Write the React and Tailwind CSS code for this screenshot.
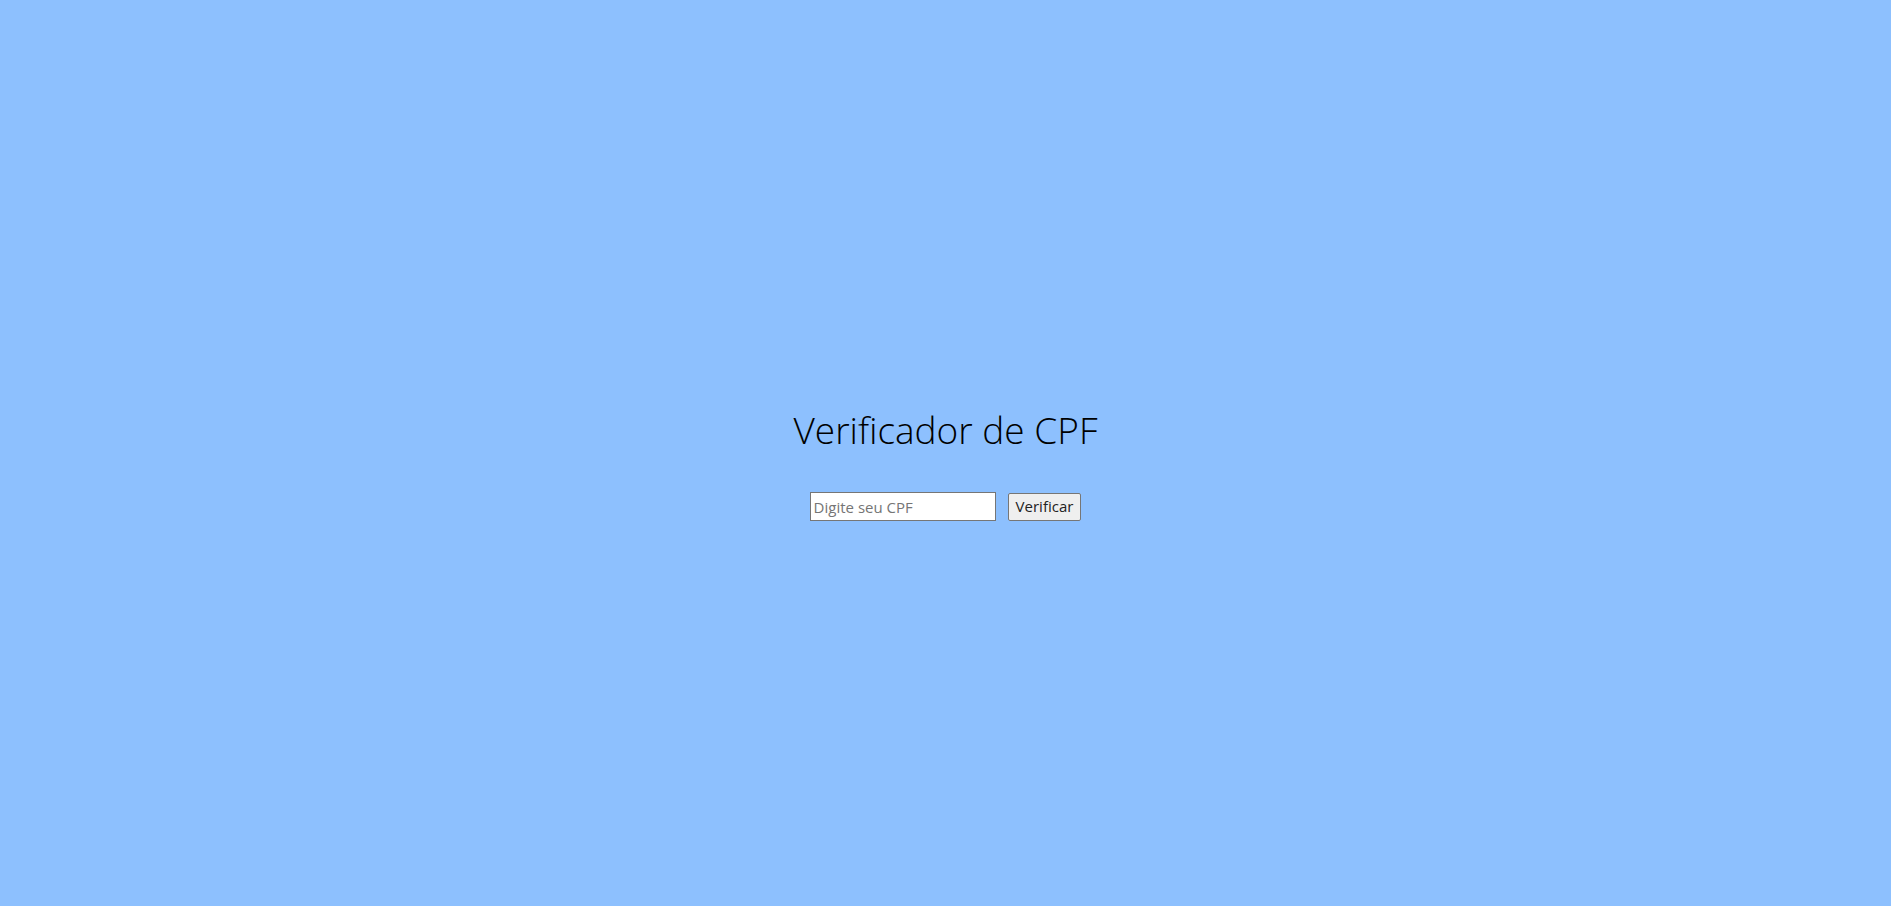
export default function App() {
  return (
    <div className="min-h-screen w-full bg-[#8dc0fe] flex flex-col items-center justify-center" style={{ fontFamily: '"Open Sans", "Noto Sans", sans-serif' }}>
      <div className="flex flex-col items-center mt-[26px]">
        <h1 className="text-[37px] font-light text-black leading-none">Verificador de CPF</h1>
        <div className="flex items-center gap-[12px] mt-[44px]">
          <input
            type="text"
            placeholder="Digite seu CPF"
            className="w-[186px] h-[29px] bg-white border border-[#767676] px-[3px] text-[15px] text-black placeholder:text-[#757575] outline-none"
          />
          <button className="h-[28px] px-[7px] bg-[#efefef] border border-[#767676] rounded-[2px] text-[15px] text-[#222]">
            Verificar
          </button>
        </div>
      </div>
    </div>
  );
}
